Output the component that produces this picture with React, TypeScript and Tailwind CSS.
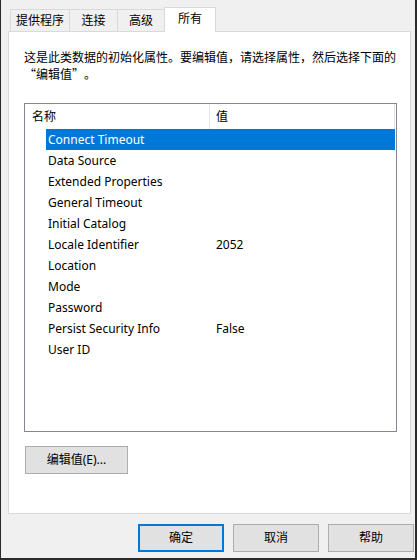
import React from "react";

const rows: { name: string; value: string; selected?: boolean }[] = [
  { name: "Connect Timeout", value: "", selected: true },
  { name: "Data Source", value: "" },
  { name: "Extended Properties", value: "" },
  { name: "General Timeout", value: "" },
  { name: "Initial Catalog", value: "" },
  { name: "Locale Identifier", value: "2052" },
  { name: "Location", value: "" },
  { name: "Mode", value: "" },
  { name: "Password", value: "" },
  { name: "Persist Security Info", value: "False" },
  { name: "User ID", value: "" },
];

export default function App() {
  return (
    <div
      className="w-[417px] h-[560px] bg-[#f0f0f0] border-l border-l-[#2b2b2b] border-r-2 border-r-[#2b2b2b] border-b-2 border-b-[#2b2b2b] flex flex-col pl-[7px] pt-[7px] text-[12px] text-black"
      style={{ fontFamily: '"Noto Sans", "Noto Sans CJK SC", sans-serif' }}
    >
      {/* Tabs */}
      <div className="flex items-end h-[24px] ml-[2px] relative z-10">
        <div className="w-[59px] h-[22px] border-t border-l border-[#d9d9d9] bg-[#f0f0f0] flex items-center justify-center leading-none">
          提供程序
        </div>
        <div className="w-[48px] h-[22px] border-t border-l border-[#d9d9d9] bg-[#f0f0f0] flex items-center justify-center leading-none">
          连接
        </div>
        <div className="w-[47px] h-[22px] border-t border-l border-[#d9d9d9] bg-[#f0f0f0] flex items-center justify-center leading-none">
          高级
        </div>
        <div className="w-[52px] h-[25px] -mb-px border-t border-l border-r border-[#d9d9d9] bg-white flex items-center justify-center leading-none pb-[2px]">
          所有
        </div>
      </div>

      {/* Panel */}
      <div className="w-[403px] h-[483px] border border-[#d9d9d9] bg-white flex flex-col">
        <div
          className="pt-[16px] pl-[15px] leading-[17px] whitespace-nowrap"
          style={{ fontFamily: '"Noto Sans CJK SC", sans-serif' }}
        >
          <div>这是此类数据的初始化属性。要编辑值，请选择属性，然后选择下面的</div>
          <div className="flex">
            <span className="inline-block w-[12px] text-right">“</span>
            <span>编辑值</span>
            <span className="inline-block w-[12px] text-left">”</span>
            <span>。</span>
          </div>
        </div>

        <div className="mt-[21px] ml-[15px] w-[373px] h-[329px] border border-[#828790] flex flex-col">
          <div className="flex h-[25px] items-center">
            <div className="w-[185px] h-full border-r border-[#e5e5e5] pl-[7px] flex items-center">名称</div>
            <div className="w-[185px] h-full border-r border-[#e5e5e5] pl-[6px] flex items-center">值</div>
          </div>
          {rows.map((r) => (
            <div key={r.name} className="flex h-[21px]">
              <div className="w-[21px]" />
              <div
                className={
                  r.selected
                    ? "flex w-[349px] h-full items-center bg-[#0078d7] text-white"
                    : "flex w-[349px] h-full items-center"
                }
              >
                <span className="w-[163px] pl-[2px] whitespace-nowrap">{r.name}</span>
                <span className="pl-[7px]">{r.value}</span>
              </div>
            </div>
          ))}
        </div>

        <div className="mt-[14px] ml-[16px] w-[103px] h-[28px] bg-[#e1e1e1] border border-[#adadad] flex items-center justify-center">
          编辑值(E)...
        </div>
      </div>

      {/* Bottom buttons */}
      <div className="flex justify-end gap-[9px] mt-[10px] pr-[1px]">
        <div className="w-[86px] h-[28px] bg-[#e1e1e1] border-2 border-[#0078d7] flex items-center justify-center">
          确定
        </div>
        <div className="w-[86px] h-[28px] bg-[#e1e1e1] border border-[#adadad] flex items-center justify-center">
          取消
        </div>
        <div className="w-[86px] h-[28px] bg-[#e1e1e1] border border-[#adadad] flex items-center justify-center">
          帮助
        </div>
      </div>
    </div>
  );
}
